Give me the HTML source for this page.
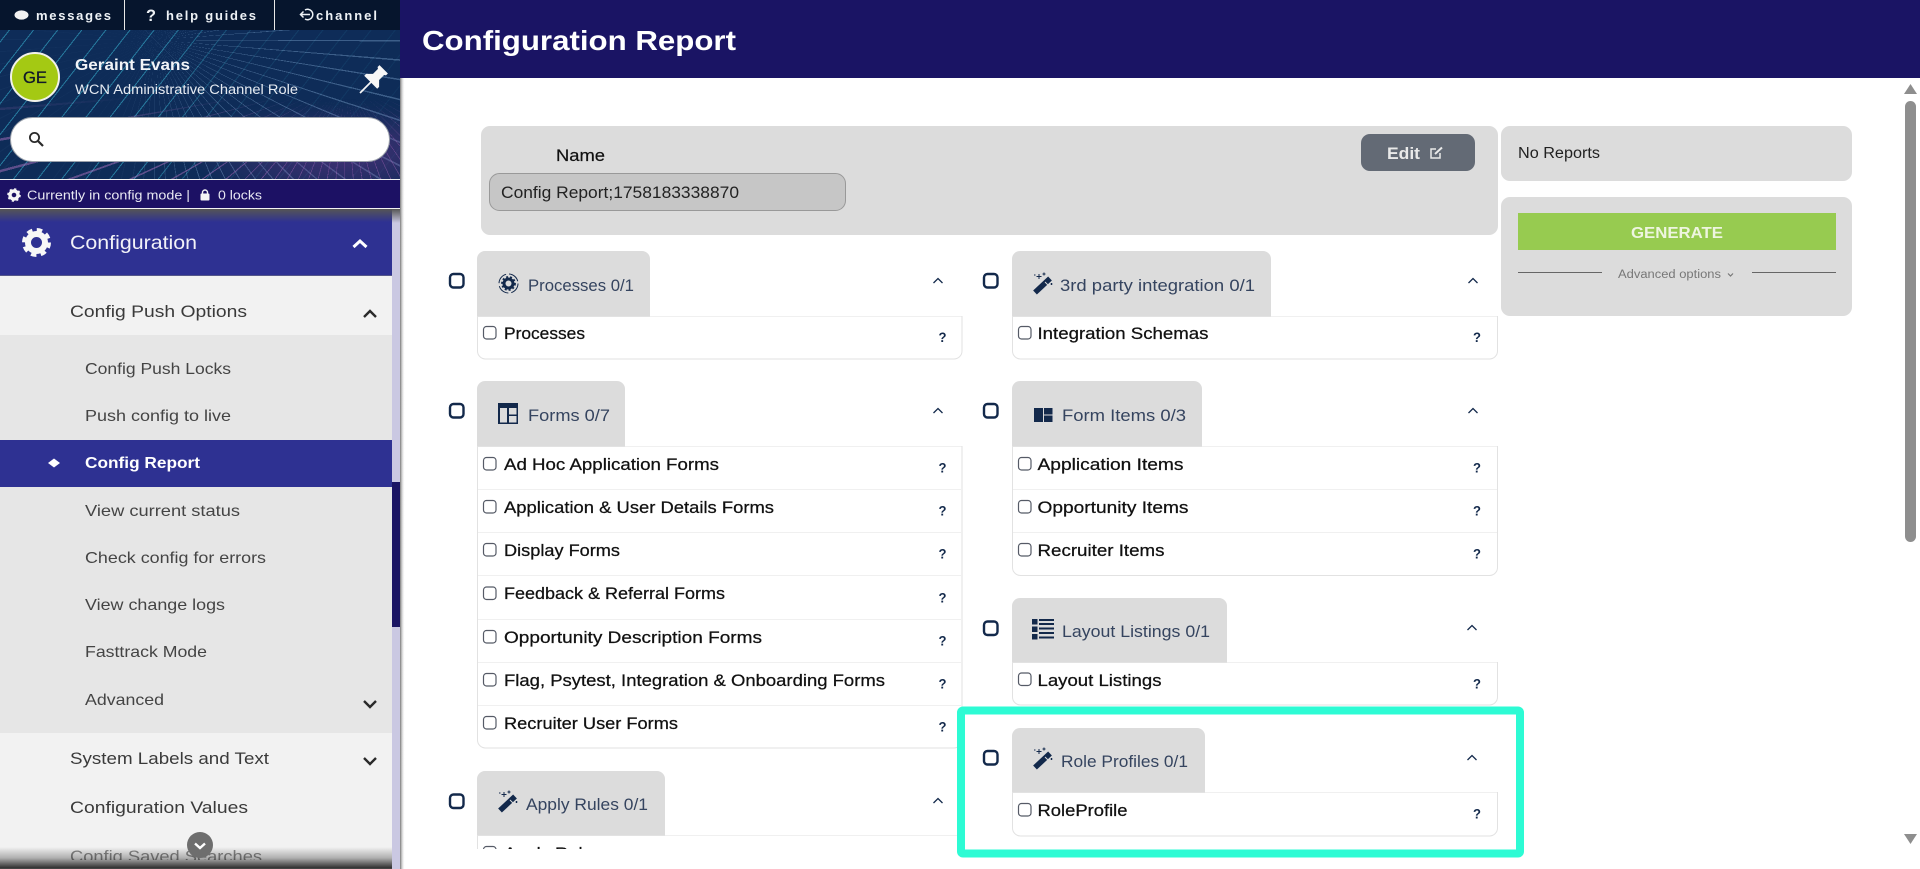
<!DOCTYPE html>
<html lang="en">
<head>
<meta charset="utf-8">
<title>Configuration Report</title>
<style>
html,body{margin:0;padding:0;width:1920px;height:869px;overflow:hidden;background:#fff}
#pat{position:absolute;left:0;top:30px;width:400px;height:149px;background-color:#0e2c58;overflow:hidden}
#pat div{position:absolute;left:0;top:0;width:400px;height:149px}
#p1{background-image:repeating-linear-gradient(-52deg,rgba(55,175,205,.6) 0 1px,rgba(0,0,0,0) 1px 19px);
 -webkit-mask-image:linear-gradient(100deg,#000 38%,rgba(0,0,0,.25) 60%,rgba(0,0,0,.1) 100%);mask-image:linear-gradient(100deg,#000 38%,rgba(0,0,0,.25) 60%,rgba(0,0,0,.1) 100%)}
#p2{background-image:repeating-conic-gradient(from 0deg at 155px 10px,rgba(125,165,205,.42) 0 .35deg,rgba(0,0,0,0) .35deg 4.5deg);
 -webkit-mask-image:linear-gradient(90deg,rgba(0,0,0,.1) 30%,#000 50%);mask-image:linear-gradient(90deg,rgba(0,0,0,.1) 30%,#000 50%)}
#p3{background-image:radial-gradient(ellipse 150px 55px at 335px 120px,rgba(125,55,150,.5),rgba(125,55,150,0)),repeating-conic-gradient(from 150deg at 345px 50px,rgba(190,120,200,.45) 0 .4deg,rgba(0,0,0,0) .4deg 5deg);
 -webkit-mask-image:linear-gradient(180deg,rgba(0,0,0,0) 45%,#000 70%);mask-image:linear-gradient(180deg,rgba(0,0,0,0) 45%,#000 70%)}
svg{position:absolute;left:0;top:0;display:block}
text{font-family:"Liberation Sans",Arial,sans-serif}
.side{font-size:16px;fill:#444}
.sub{font-size:17px;fill:#3a3a3a}
.tt{font-size:17px;fill:#35445f}
.lb{font-size:16.5px;fill:#111;stroke:#111;stroke-width:.25}
.q{font-size:14px;font-weight:bold;fill:#13294b}
.top{font-size:13px;font-weight:bold;fill:#eef2f6}
.cb{fill:#fff;stroke:#13294b;stroke-width:2.4}
.rcb{fill:#fff;stroke:#555a66;stroke-width:1.2}
.tab{fill:#dcdcdc}
.card{fill:#fff;stroke:#e2e2e2;stroke-width:1}
.ctop{stroke:#f0f0f0;stroke-width:1}
.sep{stroke:#f0f0f0;stroke-width:1}
.chev{fill:none;stroke:#13294b;stroke-width:1.3}
.navy{fill:#13294b}
</style>
</head>
<body>
<div id="pat"><div id="p1"></div><div id="p2"></div><div id="p3"></div></div>
<svg width="1920" height="869" viewBox="0 0 1920 869" xmlns="http://www.w3.org/2000/svg">
<defs>
<linearGradient id="shT" x1="0" y1="0" x2="0" y2="1"><stop offset="0" stop-color="#555"/><stop offset="1" stop-color="#2e3192"/></linearGradient>
<linearGradient id="shT2" x1="0" y1="0" x2="0" y2="1"><stop offset="0" stop-color="#555"/><stop offset="1" stop-color="#cac8e2"/></linearGradient>
<linearGradient id="shB" x1="0" y1="0" x2="0" y2="1"><stop offset="0" stop-color="#000" stop-opacity="0"/><stop offset=".5" stop-color="#000" stop-opacity=".28"/><stop offset=".95" stop-color="#000" stop-opacity=".8"/><stop offset="1" stop-color="#000" stop-opacity=".65"/></linearGradient>
<linearGradient id="shR" x1="0" y1="0" x2="1" y2="0"><stop offset="0" stop-color="#777"/><stop offset="1" stop-color="#fff" stop-opacity="0"/></linearGradient>
<clipPath id="mainClip"><rect x="404" y="78" width="1500" height="771"/></clipPath>
<clipPath id="sideClip"><rect x="0" y="209" width="392" height="651"/></clipPath>
<g id="wand">
 <path d="M2 18.500 L17 4.500" stroke="#13294b" stroke-width="5.500" stroke-linecap="butt" fill="none"/>
 <path d="M12 8 L15.500 11.500" stroke="#dcdcdc" stroke-width="1"/>
 <path d="M6 0v5M3.500 2.500h5M11 -1.500v3M9.500 0h3M18.500 9v2M17.500 10h2M1 1h1.500" stroke="#13294b" stroke-width="1" fill="none"/>
</g>
</defs>

<!-- top bar -->
<rect x="0" y="0" width="400" height="30" fill="#06152d"/>
<rect x="124" y="0" width="1" height="30" fill="#e8e8e8"/>
<rect x="274" y="0" width="1" height="30" fill="#e8e8e8"/>
<ellipse cx="21.500" cy="15" rx="7" ry="4.600" fill="#f2f2f2"/>
<text class="top" x="36" y="20" textLength="75" lengthAdjust="spacing">messages</text>
<text x="146" y="21" style="font-size:17px;font-weight:bold;fill:#eef2f6" textLength="10" lengthAdjust="spacingAndGlyphs">?</text>
<text class="top" x="166" y="20" textLength="90" lengthAdjust="spacing">help guides</text>
<path d="M305 10 A5.200 5.200 0 1 1 305 19 M300.500 14.500 H310 M303.500 11.500 L300.500 14.500 L303.500 17.500" fill="none" stroke="#eef2f6" stroke-width="1.500"/>
<text class="top" x="316" y="20" textLength="61" lengthAdjust="spacing">channel</text>

<!-- profile -->
<circle cx="35" cy="77" r="24" fill="#a4c913" stroke="#f2f2ea" stroke-width="2"/>
<text x="23" y="83" style="font-size:17px;fill:#10182a;stroke:#10182a;stroke-width:.3" textLength="24" lengthAdjust="spacingAndGlyphs">GE</text>
<text x="75" y="70" style="font-size:16px;font-weight:bold;fill:#f2f4f8" textLength="115" lengthAdjust="spacingAndGlyphs">Geraint Evans</text>
<text x="75" y="94" style="font-size:13.500px;fill:#e6ebf2" textLength="223" lengthAdjust="spacingAndGlyphs">WCN Administrative Channel Role</text>
<g transform="translate(373 80) rotate(45) scale(1.08)" fill="#f7f7f7">
 <path d="M-5.500 -14h11v2.500l-1.500 1v6.500l4.500 4.500v2.500h-17v-2.500l4.500 -4.500v-6.500l-1.500 -1z"/>
 <rect x="-.8" y="2" width="1.600" height="15"/>
</g>
<rect x="10.500" y="117.500" width="379" height="44" rx="22" fill="#fff" stroke="#9aa0aa" stroke-width="1"/>
<circle cx="34.500" cy="137.500" r="4.600" fill="none" stroke="#2a2a2a" stroke-width="1.800"/>
<path d="M38 141 L43 146" stroke="#2a2a2a" stroke-width="2.200"/>

<!-- status -->
<rect x="0" y="179" width="400" height="1" fill="#f2f2f2"/>
<rect x="0" y="180" width="400" height="28" fill="#1c1164"/>
<rect x="0" y="208" width="400" height="1" fill="#f2f2f2"/>
<circle cx="14" cy="195" r="4" fill="none" stroke="#f5f5f5" stroke-width="3.400"/>
<circle cx="14" cy="195" r="6" fill="none" stroke="#f5f5f5" stroke-width="1.600" stroke-dasharray="2.200 2.500"/>
<text x="27" y="199.500" style="font-size:13px;fill:#e8e8f2" textLength="163" lengthAdjust="spacingAndGlyphs">Currently in config mode |</text>
<rect x="200.500" y="193.500" width="9" height="7" rx="1" fill="#f5f5f5"/>
<path d="M202.500 194v-1.500a2.500 2.500 0 0 1 5 0v1.500" fill="none" stroke="#f5f5f5" stroke-width="1.400"/>
<text x="218" y="199.500" style="font-size:13px;fill:#e8e8f2" textLength="44" lengthAdjust="spacingAndGlyphs">0 locks</text>

<!-- sidebar nav -->
<rect x="0" y="209" width="400" height="660" fill="#f2f2f2"/>
<rect x="392" y="209" width="8" height="660" fill="#cac8e2"/>
<rect x="392" y="209" width="8" height="14" fill="url(#shT2)"/>
<rect x="392" y="482" width="8" height="145" fill="#1a1464"/>
<rect x="400" y="78" width="5" height="791" fill="url(#shR)"/>
<rect x="0" y="209" width="392" height="67" fill="#2e3192"/>
<rect x="0" y="209" width="392" height="13" fill="url(#shT)"/>
<rect x="0" y="275" width="392" height="1" fill="#55578a"/>
<circle cx="36.500" cy="242.500" r="8.500" fill="none" stroke="#f7f7f7" stroke-width="6"/>
<circle cx="36.500" cy="242.500" r="12.500" fill="none" stroke="#f7f7f7" stroke-width="4" stroke-dasharray="5.400 4.400"/>
<text x="70" y="249" style="font-size:19.500px;fill:#f2f2f8" textLength="127" lengthAdjust="spacingAndGlyphs">Configuration</text>
<path d="M353.500 247 L360 241 L366.500 247" fill="none" stroke="#fff" stroke-width="3"/>

<g clip-path="url(#sideClip)">
<text class="sub" x="70" y="317" textLength="177" lengthAdjust="spacingAndGlyphs">Config Push Options</text>
<path d="M364 317 L370 311 L376 317" fill="none" stroke="#2a2a2a" stroke-width="2.400"/>
<rect x="0" y="335" width="392" height="398" fill="#e6e6e6"/>
<text class="side" x="85" y="374" textLength="146" lengthAdjust="spacingAndGlyphs">Config Push Locks</text>
<text class="side" x="85" y="421" textLength="146" lengthAdjust="spacingAndGlyphs">Push config to live</text>
<rect x="0" y="440" width="392" height="47" fill="#2e3192"/>
<path d="M48 463 L54 458.500 L60 463 L54 467.500z" fill="#fff"/>
<text x="85" y="468" style="font-size:16px;font-weight:bold;fill:#fff" textLength="115" lengthAdjust="spacingAndGlyphs">Config Report</text>
<text class="side" x="85" y="516" textLength="155" lengthAdjust="spacingAndGlyphs">View current status</text>
<text class="side" x="85" y="563" textLength="181" lengthAdjust="spacingAndGlyphs">Check config for errors</text>
<text class="side" x="85" y="610" textLength="140" lengthAdjust="spacingAndGlyphs">View change logs</text>
<text class="side" x="85" y="657" textLength="122" lengthAdjust="spacingAndGlyphs">Fasttrack Mode</text>
<text class="side" x="85" y="705" textLength="79" lengthAdjust="spacingAndGlyphs">Advanced</text>
<path d="M364 701 L370 707 L376 701" fill="none" stroke="#2a2a2a" stroke-width="2.400"/>
<text class="sub" x="70" y="764" textLength="199" lengthAdjust="spacingAndGlyphs">System Labels and Text</text>
<path d="M364 758 L370 764 L376 758" fill="none" stroke="#2a2a2a" stroke-width="2.400"/>
<text class="sub" x="70" y="813" textLength="178" lengthAdjust="spacingAndGlyphs">Configuration Values</text>
<text class="sub" x="70" y="862" style="fill:#888" textLength="192" lengthAdjust="spacingAndGlyphs">Config Saved Searches</text>
</g>
<rect x="0" y="847" width="392" height="22" fill="url(#shB)"/>
<circle cx="200" cy="845" r="13" fill="#6e6e6e"/>
<path d="M195 843.500 L200 848 L205 843.500" fill="none" stroke="#fff" stroke-width="2.400"/>

<!-- header -->
<rect x="400" y="0" width="1520" height="78" fill="#1a1464"/>
<text x="422" y="50" style="font-size:28px;font-weight:bold;fill:#fff" textLength="314" lengthAdjust="spacingAndGlyphs">Configuration Report</text>

<!-- main clipped content -->
<g clip-path="url(#mainClip)">
<!-- name panel -->
<rect x="481" y="126" width="1017" height="109" rx="9" fill="#dcdcdc"/>
<text x="556" y="161" style="font-size:16.500px;fill:#111;stroke:#111;stroke-width:.2" textLength="49" lengthAdjust="spacingAndGlyphs">Name</text>
<rect x="489.500" y="173.500" width="356" height="37" rx="10" fill="#c6c6c6" stroke="#999" stroke-width="1"/>
<text x="501" y="198" style="font-size:17px;fill:#222" textLength="238" lengthAdjust="spacingAndGlyphs">Config Report;1758183338870</text>
<rect x="1361" y="134" width="114" height="37" rx="9" fill="#636a75"/>
<text x="1387" y="159" style="font-size:17px;font-weight:bold;fill:#e9e9e9" textLength="33" lengthAdjust="spacingAndGlyphs">Edit</text>
<path d="M1440 153v5h-9v-9h5" fill="none" stroke="#e9e9e9" stroke-width="1.500"/>
<path d="M1435 154 L1442 147.500" stroke="#e9e9e9" stroke-width="2"/>

<!-- right panels -->
<rect x="1501" y="126" width="351" height="55" rx="9" fill="#dcdcdc"/>
<text x="1518" y="158" style="font-size:15.500px;fill:#222" textLength="82" lengthAdjust="spacingAndGlyphs">No Reports</text>
<rect x="1501" y="197" width="351" height="119" rx="9" fill="#dcdcdc"/>
<rect x="1518" y="213" width="318" height="37" fill="#97cb50"/>
<text x="1631" y="238" style="font-size:16px;font-weight:bold;fill:#eef5e0" textLength="92" lengthAdjust="spacingAndGlyphs">GENERATE</text>
<rect x="1518" y="272" width="84" height="1" fill="#666"/>
<rect x="1752" y="272" width="84" height="1" fill="#666"/>
<text x="1618" y="278" style="font-size:11.500px;fill:#777" textLength="103" lengthAdjust="spacingAndGlyphs">Advanced options</text>
<path d="M1728 273.500 L1730.500 276 L1733 273.500" fill="none" stroke="#777" stroke-width="1.200"/>

<!-- Processes -->
<rect class="cb" x="450" y="274" width="13.500" height="13.500" rx="3.500"/>
<path class="card" d="M477.500 316.500V351a8 8 0 0 0 8 8H954a8 8 0 0 0 8-8V316.500z"/>
<path class="ctop" d="M650 316.500H961.500"/>
<path class="tab" d="M477 316V259a8 8 0 0 1 8-8H642a8 8 0 0 1 8 8V316z"/>
<circle cx="508.500" cy="283.500" r="9.500" fill="none" stroke="#13294b" stroke-width="1" stroke-dasharray="12 3"/>
<circle cx="508.500" cy="283.500" r="4.500" fill="none" stroke="#13294b" stroke-width="3"/>
<circle cx="508.500" cy="283.500" r="6.500" fill="none" stroke="#13294b" stroke-width="1.800" stroke-dasharray="2 2"/>
<text class="tt" x="528" y="291" textLength="106" lengthAdjust="spacingAndGlyphs">Processes 0/1</text>
<path class="chev" d="M933.500 283 L938 278.500 L942.500 283"/>
<rect class="rcb" x="483.500" y="326.500" width="12.500" height="12.500" rx="3"/>
<text class="lb" x="504" y="339" textLength="81" lengthAdjust="spacingAndGlyphs">Processes</text>
<text class="q" x="938.500" y="342" textLength="8" lengthAdjust="spacingAndGlyphs">?</text>

<!-- Forms -->
<rect class="cb" x="450" y="404" width="13.500" height="13.500" rx="3.500"/>
<path class="card" d="M477.500 446.500V740a8 8 0 0 0 8 8H954a8 8 0 0 0 8-8V446.500z"/>
<path class="ctop" d="M625 446.500H961.500"/>
<path class="tab" d="M477 446V389a8 8 0 0 1 8-8H617a8 8 0 0 1 8 8V446z"/>
<rect x="498" y="403" width="20" height="21" class="navy"/>
<rect x="500" y="408" width="7" height="14.500" fill="#dcdcdc"/>
<rect x="509" y="408" width="7.500" height="6.500" fill="#dcdcdc"/>
<rect x="509" y="416" width="7.500" height="6.500" fill="#dcdcdc"/>
<text class="tt" x="528" y="421" textLength="82" lengthAdjust="spacingAndGlyphs">Forms 0/7</text>
<path class="chev" d="M933.500 413 L938 408.500 L942.500 413"/>
<path class="sep" d="M478 489.500H961M478 532.500H961M478 575.500H961M478 619.500H961M478 662.500H961M478 705.500H961"/>
<rect class="rcb" x="483.500" y="457.500" width="12.500" height="12.500" rx="3"/>
<text class="lb" x="504" y="470" textLength="215" lengthAdjust="spacingAndGlyphs">Ad Hoc Application Forms</text>
<text class="q" x="938.500" y="472.500" textLength="8" lengthAdjust="spacingAndGlyphs">?</text>
<rect class="rcb" x="483.500" y="500.500" width="12.500" height="12.500" rx="3"/>
<text class="lb" x="504" y="513" textLength="270" lengthAdjust="spacingAndGlyphs">Application &amp; User Details Forms</text>
<text class="q" x="938.500" y="515.500" textLength="8" lengthAdjust="spacingAndGlyphs">?</text>
<rect class="rcb" x="483.500" y="543.500" width="12.500" height="12.500" rx="3"/>
<text class="lb" x="504" y="556" textLength="116" lengthAdjust="spacingAndGlyphs">Display Forms</text>
<text class="q" x="938.500" y="558.500" textLength="8" lengthAdjust="spacingAndGlyphs">?</text>
<rect class="rcb" x="483.500" y="587" width="12.500" height="12.500" rx="3"/>
<text class="lb" x="504" y="599" textLength="221" lengthAdjust="spacingAndGlyphs">Feedback &amp; Referral Forms</text>
<text class="q" x="938.500" y="602.500" textLength="8" lengthAdjust="spacingAndGlyphs">?</text>
<rect class="rcb" x="483.500" y="630.500" width="12.500" height="12.500" rx="3"/>
<text class="lb" x="504" y="643" textLength="258" lengthAdjust="spacingAndGlyphs">Opportunity Description Forms</text>
<text class="q" x="938.500" y="645.500" textLength="8" lengthAdjust="spacingAndGlyphs">?</text>
<rect class="rcb" x="483.500" y="673.500" width="12.500" height="12.500" rx="3"/>
<text class="lb" x="504" y="686" textLength="381" lengthAdjust="spacingAndGlyphs">Flag, Psytest, Integration &amp; Onboarding Forms</text>
<text class="q" x="938.500" y="688.500" textLength="8" lengthAdjust="spacingAndGlyphs">?</text>
<rect class="rcb" x="483.500" y="716.500" width="12.500" height="12.500" rx="3"/>
<text class="lb" x="504" y="729" textLength="174" lengthAdjust="spacingAndGlyphs">Recruiter User Forms</text>
<text class="q" x="938.500" y="731.500" textLength="8" lengthAdjust="spacingAndGlyphs">?</text>

<!-- Apply Rules -->
<rect class="cb" x="450" y="794.500" width="13.500" height="13.500" rx="3.500"/>
<path class="card" d="M477.500 835.500V880H962V835.500z"/>
<path class="ctop" d="M665 835.500H961.500"/>
<path class="tab" d="M477 835V779a8 8 0 0 1 8-8H657a8 8 0 0 1 8 8V835z"/>
<use href="#wand" x="498" y="792"/>
<text class="tt" x="526" y="810" textLength="122" lengthAdjust="spacingAndGlyphs">Apply Rules 0/1</text>
<path class="chev" d="M933.500 803 L938 798.500 L942.500 803"/>
<rect class="rcb" x="483.500" y="846.500" width="12.500" height="12.500" rx="3"/>
<text class="lb" x="504" y="859" textLength="98" lengthAdjust="spacingAndGlyphs">Apply Rules</text>

<!-- 3rd party -->
<rect class="cb" x="984" y="274" width="13.500" height="13.500" rx="3.500"/>
<path class="card" d="M1012.500 316.500V351a8 8 0 0 0 8 8H1489.500a8 8 0 0 0 8-8V316.500z"/>
<path class="ctop" d="M1271 316.500H1497"/>
<path class="tab" d="M1012 316V259a8 8 0 0 1 8-8H1263a8 8 0 0 1 8 8V316z"/>
<use href="#wand" x="1033" y="274"/>
<text class="tt" x="1060" y="291" textLength="195" lengthAdjust="spacingAndGlyphs">3rd party integration 0/1</text>
<path class="chev" d="M1468.500 283 L1473 278.500 L1477.500 283"/>
<rect class="rcb" x="1018.500" y="326.500" width="12.500" height="12.500" rx="3"/>
<text class="lb" x="1037.500" y="339" textLength="171" lengthAdjust="spacingAndGlyphs">Integration Schemas</text>
<text class="q" x="1473" y="342" textLength="8" lengthAdjust="spacingAndGlyphs">?</text>

<!-- Form Items -->
<rect class="cb" x="984" y="404" width="13.500" height="13.500" rx="3.500"/>
<path class="card" d="M1012.500 446.500V567.500a8 8 0 0 0 8 8H1489.500a8 8 0 0 0 8-8V446.500z"/>
<path class="ctop" d="M1202 446.500H1497"/>
<path class="tab" d="M1012 446V389a8 8 0 0 1 8-8H1194a8 8 0 0 1 8 8V446z"/>
<rect x="1034" y="408" width="9" height="14" class="navy"/>
<rect x="1044" y="408" width="8.500" height="6.500" class="navy"/>
<rect x="1044" y="415.500" width="8.500" height="6.500" class="navy"/>
<text class="tt" x="1062" y="421" textLength="124" lengthAdjust="spacingAndGlyphs">Form Items 0/3</text>
<path class="chev" d="M1468.500 413 L1473 408.500 L1477.500 413"/>
<path class="sep" d="M1013 489.500H1497M1013 532.500H1497"/>
<rect class="rcb" x="1018.500" y="457.500" width="12.500" height="12.500" rx="3"/>
<text class="lb" x="1037.500" y="470" textLength="146" lengthAdjust="spacingAndGlyphs">Application Items</text>
<text class="q" x="1473" y="472.500" textLength="8" lengthAdjust="spacingAndGlyphs">?</text>
<rect class="rcb" x="1018.500" y="500.500" width="12.500" height="12.500" rx="3"/>
<text class="lb" x="1037.500" y="513" textLength="151" lengthAdjust="spacingAndGlyphs">Opportunity Items</text>
<text class="q" x="1473" y="515.500" textLength="8" lengthAdjust="spacingAndGlyphs">?</text>
<rect class="rcb" x="1018.500" y="543.500" width="12.500" height="12.500" rx="3"/>
<text class="lb" x="1037.500" y="556" textLength="127" lengthAdjust="spacingAndGlyphs">Recruiter Items</text>
<text class="q" x="1473" y="558.500" textLength="8" lengthAdjust="spacingAndGlyphs">?</text>

<!-- Layout Listings -->
<rect class="cb" x="984" y="621.500" width="13.500" height="13.500" rx="3.500"/>
<path class="card" d="M1012.500 662.500V697a8 8 0 0 0 8 8H1489.500a8 8 0 0 0 8-8V662.500z"/>
<path class="ctop" d="M1227 662.500H1497"/>
<path class="tab" d="M1012 662V606a8 8 0 0 1 8-8H1219a8 8 0 0 1 8 8V662z"/>
<path class="navy" d="M1032 619h5.500v5.500h-5.500zM1032 626.500h5.500v5.500h-5.500zM1032 634h5.500v5.500h-5.500zM1039 619h15v2h-15zM1039 623h15v2h-15zM1039 627.500h15v2h-15zM1039 632h15v2h-15zM1039 636.500h15v2h-15z"/>
<text class="tt" x="1062" y="637" textLength="148" lengthAdjust="spacingAndGlyphs">Layout Listings 0/1</text>
<path class="chev" d="M1467.500 630 L1472 625.500 L1476.500 630"/>
<rect class="rcb" x="1018.500" y="673" width="12.500" height="12.500" rx="3"/>
<text class="lb" x="1037.500" y="686" textLength="124" lengthAdjust="spacingAndGlyphs">Layout Listings</text>
<text class="q" x="1473" y="688.500" textLength="8" lengthAdjust="spacingAndGlyphs">?</text>

<!-- Role Profiles -->
<rect class="cb" x="984" y="751" width="13.500" height="13.500" rx="3.500"/>
<path class="card" d="M1012.500 792.500V828a8 8 0 0 0 8 8H1489.500a8 8 0 0 0 8-8V792.500z"/>
<path class="ctop" d="M1205 792.500H1497"/>
<path class="tab" d="M1012 792V736a8 8 0 0 1 8-8H1197a8 8 0 0 1 8 8V792z"/>
<use href="#wand" x="1033" y="749"/>
<text class="tt" x="1061" y="767" textLength="127" lengthAdjust="spacingAndGlyphs">Role Profiles 0/1</text>
<path class="chev" d="M1467.500 760 L1472 755.500 L1476.500 760"/>
<rect class="rcb" x="1018.500" y="803.500" width="12.500" height="12.500" rx="3"/>
<text class="lb" x="1037.500" y="816" textLength="90" lengthAdjust="spacingAndGlyphs">RoleProfile</text>
<text class="q" x="1473" y="818.500" textLength="8" lengthAdjust="spacingAndGlyphs">?</text>
</g>

<!-- highlight -->
<rect x="961" y="710.500" width="559" height="143" rx="2" fill="none" stroke="#2dfbd4" stroke-width="8"/>

<!-- page scrollbar -->
<path d="M1904 94 L1910.500 84 L1917 94z" fill="#8e8e8e"/>
<rect x="1905" y="101" width="11" height="441" rx="5.500" fill="#8e8e8e"/>
<path d="M1904 834 L1910.500 844 L1917 834z" fill="#8e8e8e"/>
</svg>
</body>
</html>
